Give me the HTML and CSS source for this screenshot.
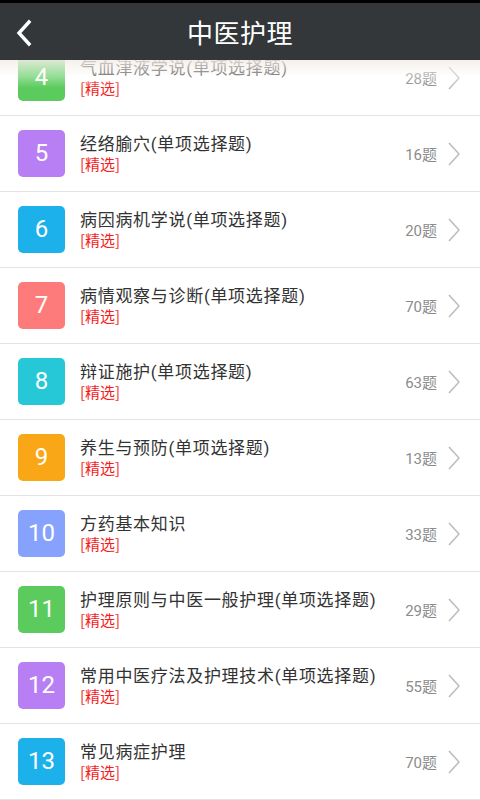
FILE: index.html
```html
<!DOCTYPE html>
<html lang="zh-CN">
<head>
<meta charset="utf-8">
<title>中医护理</title>
<link rel="stylesheet" href="styles.css">
</head>
<body>
<div class="screen">
  <div class="statusbar"></div>
  <header class="topbar">
    <svg class="back" width="18" height="28" viewBox="0 0 18 28"><path d="M14 3 L4 14 L14 25" fill="none" stroke="#fff" stroke-width="3.4" stroke-linecap="square"/></svg>
    <h1 class="title">中医护理</h1>
  </header>
  <main class="viewport">
    <div class="fade"></div>
    <ul class="list">
      <li class="row"><span class="num c-green">4</span><div class="text"><div class="name">气血津液学说(单项选择题)</div><div class="tag">[精选]</div></div><span class="count">28题</span><svg class="chev" width="12" height="24" viewBox="0 0 12 24"><path d="M1 1 L11 12 L1 23" fill="none" stroke="#bdbdbd" stroke-width="1.6"/></svg></li>
      <li class="row"><span class="num c-purple">5</span><div class="text"><div class="name">经络腧穴(单项选择题)</div><div class="tag">[精选]</div></div><span class="count">16题</span><svg class="chev" width="12" height="24" viewBox="0 0 12 24"><path d="M1 1 L11 12 L1 23" fill="none" stroke="#bdbdbd" stroke-width="1.6"/></svg></li>
      <li class="row"><span class="num c-blue">6</span><div class="text"><div class="name">病因病机学说(单项选择题)</div><div class="tag">[精选]</div></div><span class="count">20题</span><svg class="chev" width="12" height="24" viewBox="0 0 12 24"><path d="M1 1 L11 12 L1 23" fill="none" stroke="#bdbdbd" stroke-width="1.6"/></svg></li>
      <li class="row"><span class="num c-red">7</span><div class="text"><div class="name">病情观察与诊断(单项选择题)</div><div class="tag">[精选]</div></div><span class="count">70题</span><svg class="chev" width="12" height="24" viewBox="0 0 12 24"><path d="M1 1 L11 12 L1 23" fill="none" stroke="#bdbdbd" stroke-width="1.6"/></svg></li>
      <li class="row"><span class="num c-cyan">8</span><div class="text"><div class="name">辩证施护(单项选择题)</div><div class="tag">[精选]</div></div><span class="count">63题</span><svg class="chev" width="12" height="24" viewBox="0 0 12 24"><path d="M1 1 L11 12 L1 23" fill="none" stroke="#bdbdbd" stroke-width="1.6"/></svg></li>
      <li class="row"><span class="num c-orange">9</span><div class="text"><div class="name">养生与预防(单项选择题)</div><div class="tag">[精选]</div></div><span class="count">13题</span><svg class="chev" width="12" height="24" viewBox="0 0 12 24"><path d="M1 1 L11 12 L1 23" fill="none" stroke="#bdbdbd" stroke-width="1.6"/></svg></li>
      <li class="row"><span class="num c-indigo">10</span><div class="text"><div class="name">方药基本知识</div><div class="tag">[精选]</div></div><span class="count">33题</span><svg class="chev" width="12" height="24" viewBox="0 0 12 24"><path d="M1 1 L11 12 L1 23" fill="none" stroke="#bdbdbd" stroke-width="1.6"/></svg></li>
      <li class="row"><span class="num c-green">11</span><div class="text"><div class="name">护理原则与中医一般护理(单项选择题)</div><div class="tag">[精选]</div></div><span class="count">29题</span><svg class="chev" width="12" height="24" viewBox="0 0 12 24"><path d="M1 1 L11 12 L1 23" fill="none" stroke="#bdbdbd" stroke-width="1.6"/></svg></li>
      <li class="row"><span class="num c-purple">12</span><div class="text"><div class="name">常用中医疗法及护理技术(单项选择题)</div><div class="tag">[精选]</div></div><span class="count">55题</span><svg class="chev" width="12" height="24" viewBox="0 0 12 24"><path d="M1 1 L11 12 L1 23" fill="none" stroke="#bdbdbd" stroke-width="1.6"/></svg></li>
      <li class="row"><span class="num c-blue">13</span><div class="text"><div class="name">常见病症护理</div><div class="tag">[精选]</div></div><span class="count">70题</span><svg class="chev" width="12" height="24" viewBox="0 0 12 24"><path d="M1 1 L11 12 L1 23" fill="none" stroke="#bdbdbd" stroke-width="1.6"/></svg></li>
    </ul>
  </main>
</div>
</body>
</html>
```
FILE: styles.css
```css
* { box-sizing: border-box; }
html, body { margin: 0; padding: 0; background: #fff; }
body {
  font-family: Roboto, "Noto Sans CJK SC", sans-serif;
}
.screen {
  width: 480px;
  height: 800px;
  display: flex;
  flex-direction: column;
  overflow: hidden;
  background: #fff;
}
.statusbar {
  height: 3px;
  background: #000;
  flex: none;
}
.topbar {
  flex: none;
  height: 57px;
  background: #33373a;
  display: flex;
  align-items: center;
  justify-content: center;
  position: relative;
}
.back {
  position: absolute;
  left: 15px;
  top: 16px;
}
.title {
  margin: 0;
  font-family: "Noto Sans CJK SC", sans-serif;
  font-weight: 400;
  font-size: 26px;
  line-height: 30px;
  color: #fff;
  letter-spacing: 0.5px;
}
.viewport {
  flex: 1;
  overflow: hidden;
  position: relative;
}
.fade {
  position: absolute;
  left: 0; right: 0; top: 0;
  height: 28px;
  background: linear-gradient(to bottom, rgba(244,238,232,0.85), rgba(255,255,255,0.35) 60%, rgba(255,255,255,0));
  z-index: 2;
  pointer-events: none;
}
.list {
  list-style: none;
  margin: -20px 0 0 0;
  padding: 0;
}
.row {
  height: 76px;
  border-bottom: 1px solid #e2e2e2;
  display: flex;
  align-items: center;
  padding: 0 20px 0 18px;
}
.num {
  flex: none;
  width: 47px;
  height: 47px;
  border-radius: 5px;
  color: #fff;
  font-family: Roboto, sans-serif;
  font-size: 24px;
  display: flex;
  align-items: center;
  justify-content: center;
  margin-bottom: 1px;
}
.c-green { background: #5acb5c; }
.c-purple { background: #b87ff5; }
.c-blue { background: #1db1ec; }
.c-red { background: #fd7b7b; }
.c-cyan { background: #26c8d8; }
.c-orange { background: #f9a717; }
.c-indigo { background: #86a2fc; }
.text {
  flex: 1;
  margin-left: 15px;
  min-width: 0;
}
.name {
  font-family: Roboto, "Noto Sans CJK SC", sans-serif;
  font-size: 17px;
  line-height: 21px;
  letter-spacing: 0.7px;
  color: #333;
  white-space: nowrap;
}
.tag {
  font-family: "Noto Sans CJK SC", sans-serif;
  font-size: 15px;
  line-height: 18px;
  color: #f51c1c;
}
.count {
  flex: none;
  font-family: Roboto, "Noto Sans CJK SC", sans-serif;
  font-size: 15px;
  color: #8c8c8c;
  margin-right: 11px;
}
.chev { flex: none; }
```
